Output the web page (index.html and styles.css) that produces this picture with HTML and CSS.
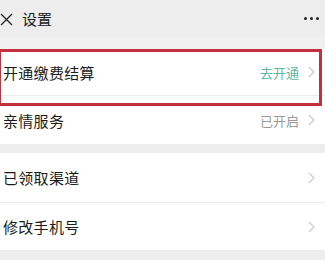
FILE: index.html
```html
<!DOCTYPE html>
<html lang="zh">
<head>
<meta charset="utf-8">
<link rel="stylesheet" href="styles.css">
</head>
<body>
<div class="page">
  <header class="top">
    <svg class="close" width="13" height="13" viewBox="0 0 13 13"><path d="M1 1L12 12M12 1L1 12" stroke="#222" stroke-width="1.3" fill="none"/></svg>
    <span class="title">设置</span>
    <span class="more"><i></i><i></i><i></i></span>
  </header>
  <div class="gap g1"></div>
  <section class="group">
    <div class="row r1">
      <span class="label">开通缴费结算</span>
      <span class="value teal">去开通</span>
      <svg class="chev" width="7" height="12" viewBox="0 0 7 12"><path d="M1 1L6 6L1 11" stroke="#c9c9c9" stroke-width="1.1" fill="none"/></svg>
    </div>
    <div class="row r2">
      <span class="label">亲情服务</span>
      <span class="value">已开启</span>
      <svg class="chev" width="7" height="12" viewBox="0 0 7 12"><path d="M1 1L6 6L1 11" stroke="#c9c9c9" stroke-width="1.1" fill="none"/></svg>
    </div>
    <div class="highlight"></div>
  </section>
  <div class="gap g2"></div>
  <section class="group">
    <div class="row r3">
      <span class="label">已领取渠道</span>
      <svg class="chev" width="7" height="12" viewBox="0 0 7 12"><path d="M1 1L6 6L1 11" stroke="#c9c9c9" stroke-width="1.1" fill="none"/></svg>
    </div>
    <div class="row r4">
      <span class="label">修改手机号</span>
      <svg class="chev" width="7" height="12" viewBox="0 0 7 12"><path d="M1 1L6 6L1 11" stroke="#c9c9c9" stroke-width="1.1" fill="none"/></svg>
    </div>
  </section>
  <div class="gap g3"></div>
  <div class="rest"></div>
</div>
</body>
</html>
```
FILE: styles.css
```css
html, body {
  margin: 0;
  padding: 0;
  background: #ffffff;
}
.page {
  width: 325px;
  height: 272px;
  overflow: hidden;
  font-family: "Noto Sans CJK SC", "Noto Sans", sans-serif;
  color: #1b1b1b;
}
.top {
  height: 37px;
  background: #ededed;
  display: flex;
  align-items: center;
  padding: 0 5px 0 0;
}
.close {
  margin-left: 0;
  margin-top: 1px;
}
.title {
  margin-left: 9px;
  font-size: 15px;
  line-height: 1;
}
.more {
  margin-left: auto;
  display: flex;
  gap: 3px;
  margin-right: 1px;
}
.more i {
  display: block;
  width: 3px;
  height: 3px;
  background: #222;
  border-radius: 50%;
}
.gap {
  background: #f0f0f0;
}
.g1 { height: 12px; }
.g2 { height: 9px; background: #ededed; }
.g3 { height: 10px; background: #ededed; }
.group {
  position: relative;
  background: #fff;
}
.row {
  display: flex;
  align-items: center;
  padding: 0 10px 0 3px;
  font-size: 15px;
}
.r1 { height: 46px; border-bottom: 1px solid #ececec; }
.r2 { height: 48px; }
.r3 { height: 49px; border-bottom: 1px solid #ececec; }
.r4 { height: 47px; }
.label {
  flex: 1;
  letter-spacing: 0.3px;
}
.value {
  font-size: 13px;
  color: #9a9a9a;
  margin-right: 9px;
}
.teal {
  color: #5bb8a6;
}
.chev {
  display: block;
}
.highlight {
  position: absolute;
  left: -2px;
  top: 0;
  width: 324px;
  height: 57px;
  box-sizing: border-box;
  border: 3px solid #c4303b;
  pointer-events: none;
}
.rest {
  height: 20px;
  background: #fff;
}
```
